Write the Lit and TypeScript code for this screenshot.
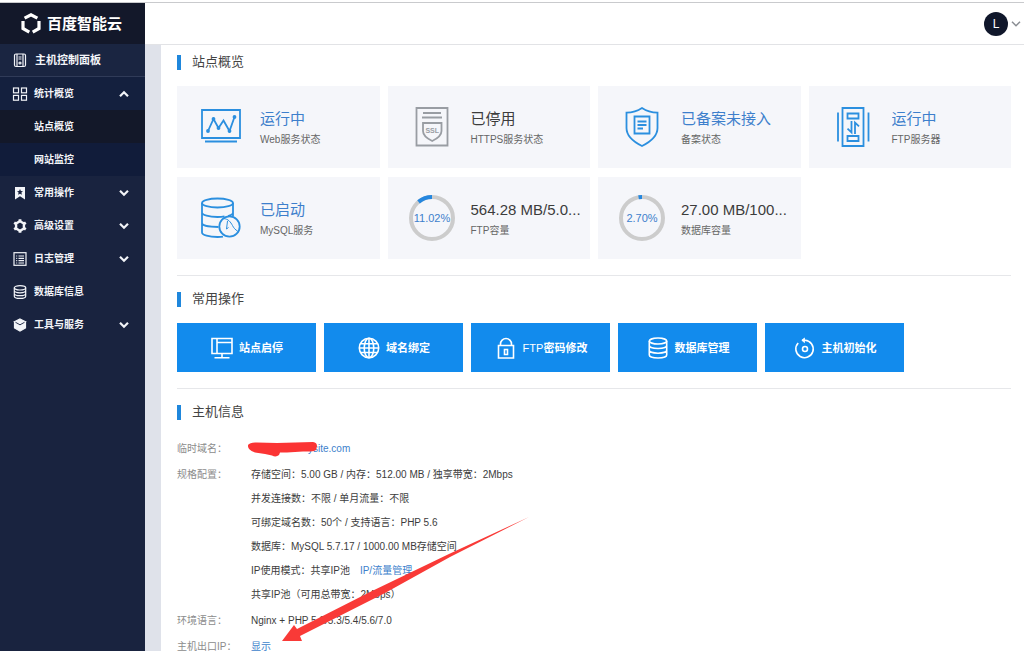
import { LitElement, html, css, svg, nothing, TemplateResult } from "lit";
import { customElement, property, state } from "lit/decorators.js";
import { classMap } from "lit/directives/class-map.js";

const icons: Record<string, TemplateResult> = {
  host: svg`<rect x="2.5" y="2" width="11" height="12.500" rx="1.5"/><path d="M5 2v12.500M11 2v12.500M6.500 5h3M6.500 7h3"/><circle cx="8" cy="11" r="1"/>`,
  grid: svg`<rect x="1.500" y="2" width="5" height="4.800"/><rect x="9.500" y="2" width="5" height="4.800"/><rect x="1.500" y="9.400" width="5" height="4.800"/><rect x="9.500" y="9.400" width="5" height="4.800"/>`,
  bookmark: svg`<path d="M3 2h10v12.500l-5-3.200-5 3.200z" fill="currentColor" stroke="none"/><path d="M8 4l.9 2 2.100.2-1.600 1.400.5 2.200L8 8.700l-1.900 1.100.5-2.200L5 6.200l2.100-.2z" fill="#19233f" stroke="none"/>`,
  gear: svg`<path d="M8 3.200l3.900 2.300v5L8 12.800l-3.900-2.300v-5z" stroke-width="2.400"/><path d="M8 1.200v2.300M8 12.500v2.300M2.200 4.600l1.800 1.100M12 10.300l1.800 1.100M2.200 11.400l1.800-1.100M12 5.700l1.800-1.100" stroke-width="2.800"/>`,
  list: svg`<rect x="2" y="1.700" width="12" height="12.600"/><path d="M4.200 5h1M6.500 5h5.500M4.200 7.300h1M6.500 7.300h5.500M4.200 9.600h1M6.500 9.600h5.500M4.200 12h1M6.500 12h5.500"/>`,
  db: svg`<ellipse cx="8" cy="3.800" rx="5.700" ry="2.200"/><path d="M2.300 3.800v8.400c0 1.300 2.500 2.200 5.700 2.200s5.700-.9 5.700-2.200V3.800M2.300 6.600c0 1.300 2.500 2.200 5.700 2.200s5.700-.9 5.700-2.200M2.300 9.400c0 1.300 2.500 2.200 5.700 2.200s5.700-.9 5.700-2.200"/>`,
  box: svg`<path d="M8 2l5.500 2.700L8 7.500 2.500 4.700z" fill="currentColor"/><path d="M2.500 5.500L8 8.200l5.500-2.700v5.500L8 14l-5.500-3z" fill="currentColor"/><path d="M3.500 5.300L8 7.800l4.500-2.500" stroke="#19233f" stroke-width=".9"/>`,
  chevron: svg`<path d="M4 5.800l4 4 4-4"/>`,
  logo: svg`<path d="M5.600 6.200L12 2.800l6.400 3.400M4 9v7.500l6.300 3.600M20 9v7.500l-6.300 3.600"/>`,
  web: svg`<path d="M4 6h38v28H4zM7 37.500h32"/><path d="M10 27l5.500-12 5 9 5-7.500 6 10.500 5-14"/><g fill="currentColor"><circle cx="10" cy="27" r="1"/><circle cx="15.500" cy="15" r="1"/><circle cx="20.500" cy="24" r="1"/><circle cx="31.500" cy="27" r="1"/><circle cx="36.500" cy="13" r="1"/></g>`,
  ssl: svg`<path d="M7.500 4h31v37.500h-31zM14 9h18M13 13.500h20"/><path d="M14 19h18.500v8c0 5-4 7.500-9.300 10C18 34.500 14 32 14 27z"/><text x="23.200" y="28.500" text-anchor="middle" font-size="7" font-weight="700" stroke="none" fill="currentColor">SSL</text>`,
  shield: svg`<path d="M23 4c4.500 3 9.500 4.500 15.500 4.700V24c0 8.500-7 13.800-15.500 18C14.500 37.800 7.500 32.500 7.500 24V8.700C13.500 8.500 18.500 7 23 4z"/><path d="M15.500 12.500h15v17h-15zM18.500 17.500h9M18.500 21h9M18.500 24.500h5.500"/>`,
  ftp: svg`<path d="M12.500 4h21v38h-21zM8 8.500v29M38.500 8.500v29M17.500 9.500h11v5h-11zM17.500 32h11v5h-11z"/><path d="M21.500 17v11.500l-4-3.800M25 30V18.500l4 3.800"/>`,
  mysql: svg`<ellipse cx="19.500" cy="8" rx="15.500" ry="4.500"/><path d="M4 8v29.500c0 2.500 7 4.500 15.500 4.500 2.200 0 4-.1 5.500-.4M35 8v13.500M4 17.500C4 20 11 22 19.500 22c3 0 5-.2 7-.6M35 17.500c0 1.500-2 2.700-5 3.500M4 28c0 2.200 6.500 4 16.500 4"/><circle cx="31.500" cy="31.500" r="10.200"/><path d="M25.500 23.500c5 .5 7 3.500 9 7 1 2.200 3 4.500 5 5.500M29.500 26l-1 8M28.500 34l2-1.500" stroke-width="1"/>`,
  screen: svg`<path d="M2 2.500h20v15H2zM7 2.500v15M7 6.500h15M12 17.500v4M4.500 21.800h15"/>`,
  globe: svg`<circle cx="12" cy="12" r="9.700"/><ellipse cx="12" cy="12" rx="4.800" ry="9.700"/><path d="M12 2.300v19.400M3.500 7.700h17M2.300 12h19.400M3.500 16.500h17"/>`,
  lock: svg`<path d="M4.500 9.500h15V22h-15zM6.500 9.500V8C6.500 5 9 2.500 12 2.500S17.500 5 17.500 8v1.500M10.500 13.500h3v5h-3z"/>`,
  bigdb: svg`<ellipse cx="12" cy="5" rx="8.700" ry="3"/><path d="M3.300 5v14c0 1.700 3.900 3 8.700 3s8.700-1.300 8.700-3V5M3.300 9.500c0 1.700 3.900 3 8.700 3s8.700-1.300 8.700-3M3.300 14.200c0 1.700 3.900 3 8.700 3s8.700-1.300 8.700-3"/>`,
  reset: svg`<path d="M5.200 7A8.700 8.700 0 1 0 12 4.300H9"/><path d="M11.500 2L8.800 4.300l2.700 2.300z" fill="currentColor" stroke-width=".8"/><circle cx="12" cy="13" r="2.500"/>`,
};

const icon = (name: string, size: number, stroke: number) => html`<svg
  aria-hidden="true" width=${size} height=${size} viewBox="0 0 ${size} ${size}"
  fill="none" stroke="currentColor" stroke-width=${stroke}>${icons[name]}</svg>`;

const FONT = css`"Liberation Sans", "Noto Sans CJK SC", sans-serif`;

interface NavItem { icon: string; label: string; children?: string[]; expandable?: boolean }

const NAV: NavItem[] = [
  { icon: "grid", label: "统计概览", expandable: true, children: ["站点概览", "网站监控"] },
  { icon: "bookmark", label: "常用操作", expandable: true },
  { icon: "gear", label: "高级设置", expandable: true },
  { icon: "list", label: "日志管理", expandable: true },
  { icon: "db", label: "数据库信息" },
  { icon: "box", label: "工具与服务", expandable: true },
];

@customElement("side-nav")
export class SideNav extends LitElement {
  @state() private open = "统计概览";

  static styles = css`
    :host { display: block; background: #19233f; color: #f2f4f8; font: bold 10px/15px ${FONT}; }
    svg { flex: none; display: block; }
    .logo { display: flex; align-items: center; gap: 4px; height: 41px; padding-left: 19px; background: #13182a; font-size: 15px; line-height: 20px; color: #fff; }
    .panel, .item, .child { box-sizing: border-box; display: flex; align-items: center; width: 100%; height: 33px; border: 0; margin: 0; color: inherit; font: inherit; text-decoration: none; text-align: left; background: none; }
    .panel { padding: 0 12px; gap: 7px; font-size: 11px; background: #1a2541; border-bottom: 1px solid #303b58; }
    .item { padding: 0 13px 0 12px; gap: 6px; cursor: pointer; }
    .item.open { background: #14203e; }
    .label { flex: 1; }
    .child { padding-left: 34px; background: #111c3a; }
    .child.active { background: #131829; }
    .arrow { display: flex; }
    .open .arrow { transform: rotate(180deg); }
  `;

  render() {
    return html`
      <div class="logo">${icon("logo", 24, 3.2)}<span>百度智能云</span></div>
      <a class="panel" href="#panel">${icon("host", 16, 1.2)}<span>主机控制面板</span></a>
      <nav>${NAV.map((n) => this.item(n))}</nav>`;
  }

  private item(n: NavItem) {
    const open = this.open === n.label;
    const body = html`${icon(n.icon, 16, 1.2)}<span class="label">${n.label}</span>`;
    if (!n.expandable) return html`<a class="item" href="#database">${body}</a>`;
    return html`
      <button class=${classMap({ item: true, open })} aria-expanded=${open}
        @click=${() => (this.open = open ? "" : n.label)}>
        ${body}<span class="arrow">${icon("chevron", 16, 2.2)}</span>
      </button>
      ${open && n.children
        ? n.children.map((c, i) => html`<a class=${classMap({ child: true, active: i === 0 })} href="#stats">${c}</a>`)
        : nothing}`;
  }
}

@customElement("status-card")
export class StatusCard extends LitElement {
  @property() icon = "";
  @property() value = "";
  @property() label = "";
  @property() tone = "blue";
  @property({ type: Number }) percent = -1;

  static styles = css`
    :host { box-sizing: border-box; display: flex; align-items: center; gap: 16px; min-width: 0; height: 82px; padding: 0 5px 0 21px; background: #f5f6fa; font-family: ${FONT}; }
    svg { display: block; flex: none; }
    .figure { color: #2b8fdf; flex: none; }
    .figure.gray { color: #999da3; }
    .text { min-width: 0; padding-top: 2px; }
    .value { font-size: 15px; line-height: 22px; color: #3d7fcc; overflow: hidden; white-space: nowrap; text-overflow: ellipsis; }
    .value.dark { color: #3c3c3c; }
    .label { font-size: 10px; line-height: 16px; margin-top: 2px; color: #666; }
    .ring { fill: none; stroke: #cccccc; stroke-width: 4; }
    .arc { fill: none; stroke: #2587df; stroke-width: 4; }
    .pct { font-size: 11px; fill: #3d7fcc; text-anchor: middle; }
  `;

  render() {
    const length = 2 * Math.PI * 21;
    return html`
      <div class=${classMap({ figure: true, gray: this.tone === "gray" })}>
        ${this.percent < 0
          ? icon(this.icon, 46, 1.8)
          : html`<svg width="46" height="46" viewBox="0 0 46 46" role="img" aria-label=${this.label}>
              <circle class="ring" cx="23" cy="23" r="21"/>
              <circle class="arc" cx="23" cy="23" r="21" transform="matrix(0 -1 -1 0 46 46)"
                stroke-dasharray="${(length * this.percent) / 100} ${length}"/>
              <text class="pct" x="23" y="27">${this.percent.toFixed(2)}%</text>
            </svg>`}
      </div>
      <div class="text">
        <div class=${classMap({ value: true, dark: this.tone !== "blue" })}>${this.value}</div>
        <div class="label">${this.label}</div>
      </div>`;
  }
}

const CARDS = [
  { icon: "web", value: "运行中", label: "Web服务状态" },
  { icon: "ssl", value: "已停用", label: "HTTPS服务状态", tone: "gray" },
  { icon: "shield", value: "已备案未接入", label: "备案状态" },
  { icon: "ftp", value: "运行中", label: "FTP服务器" },
  { icon: "mysql", value: "已启动", label: "MySQL服务" },
  { icon: "", value: "564.28 MB/5.0...", label: "FTP容量", tone: "dark", percent: 11.02 },
  { icon: "", value: "27.00 MB/100...", label: "数据库容量", tone: "dark", percent: 2.7 },
];

const ACTIONS = [
  { icon: "screen", latin: "", label: "站点启停" },
  { icon: "globe", latin: "", label: "域名绑定" },
  { icon: "lock", latin: "FTP", label: "密码修改" },
  { icon: "bigdb", latin: "", label: "数据库管理" },
  { icon: "reset", latin: "", label: "主机初始化" },
];

@customElement("app-root")
export class AppRoot extends LitElement {
  static styles = css`
    :host { box-sizing: border-box; position: relative; display: flex; flex-direction: column; height: 100vh; overflow: hidden; padding-top: 2px; background: #fff; font-family: ${FONT}; color: #333; }
    .frame { flex: 1; min-height: 0; display: grid; grid-template-columns: 145px minmax(0, 1fr); border-top: 1px solid #c9cacd; }
    .page { display: flex; flex-direction: column; min-height: 0; background: #dfe2ea; }
    .top { box-sizing: border-box; flex: none; display: flex; justify-content: flex-end; height: 42px; background: #fff; border-bottom: 1px solid #e2e3e6; }
    .user { display: flex; align-items: center; padding: 0; border: 0; background: none; color: #8a8d93; font: inherit; cursor: pointer; }
    .avatar { width: 24px; height: 24px; border-radius: 50%; background: #10172b; color: #fff; font-size: 12px; line-height: 24px; text-align: center; }
    svg { display: block; flex: none; }
    main { flex: 1; min-height: 0; overflow: auto; scrollbar-width: none; margin-left: 16px; padding: 8px 13px 0 16px; background: #fff; }
    section + section { margin-top: 16px; padding-top: 14px; border-top: 1px solid #e6e7ea; }
    h2 { display: flex; align-items: center; gap: 11px; margin: 0 0 15px; font-size: 13px; line-height: 18px; font-weight: 400; color: #444; }
    h2::before { content: ""; width: 4px; height: 15px; background: #1f87dc; }
    .cards { display: grid; grid-template-columns: repeat(4, minmax(0, 1fr)); gap: 9px 8px; }
    .actions { display: flex; flex-wrap: wrap; gap: 8px; }
    .action { display: flex; align-items: center; justify-content: center; gap: 5px; width: 139px; height: 49px; padding: 0; border: 0; background: #128bed; color: #fff; font: bold 11px/16px ${FONT}; cursor: pointer; }
    .latin { font-weight: 400; }
    dl { display: grid; grid-template-columns: 74px minmax(0, 1fr); row-gap: 2px; margin: 16px 0 0; font-size: 10px; line-height: 24px; }
    dt { color: #8c8c8c; }
    dd { margin: 0; color: #3c3c3c; }
    a { color: #3d7fcc; text-decoration: none; }
    .more { margin-left: 10px; }
    .domain { position: relative; display: inline-block; padding-left: 57px; }
    .scribble { position: absolute; left: -4px; top: 4px; }
    .pointer { position: absolute; left: 281px; top: 516px; }
  `;

  render() {
    return html`
      <div class="frame">
        <side-nav></side-nav>
        <div class="page">
          <header class="top">
            <button class="user" aria-label="账户"><span class="avatar">L</span>${icon("chevron", 16, 1.5)}</button>
          </header>
          <main>
            <section>
              <h2>站点概览</h2>
              <div class="cards">
                ${CARDS.map((c) => html`<status-card .icon=${c.icon} .value=${c.value} .label=${c.label}
                  .tone=${c.tone ?? "blue"} .percent=${c.percent ?? -1}></status-card>`)}
              </div>
            </section>
            <section>
              <h2>常用操作</h2>
              <div class="actions">
                ${ACTIONS.map((a) => html`<button class="action">${icon(a.icon, 24, 1.6)}<span><span class="latin">${a.latin}</span>${a.label}</span></button>`)}
              </div>
            </section>
            <section>
              <h2>主机信息</h2>
              <dl>
                <dt>临时域名：</dt>
                <dd><a class="domain" href="#site">ysite.com<svg class="scribble" aria-hidden="true" width="72" height="18" viewBox="0 0 72 18"><path d="M1 4Q3 1 10 1.500L30 2 66 1Q70 1.500 70 5L69 9Q66 11 56 10.500L40 11.500 33 11.500 32 14Q29 16.500 25 14.500L18 13 8 11.500Q0 9 1 4z" fill="#fb3434"/></svg></a></dd>
                <dt>规格配置：</dt>
                <dd>
                  <div>存储空间：5.00 GB / 内存：512.00 MB / 独享带宽：2Mbps</div>
                  <div>并发连接数：不限 / 单月流量：不限</div>
                  <div>可绑定域名数：50个 / 支持语言：PHP 5.6</div>
                  <div>数据库：MySQL 5.7.17 / 1000.00 MB存储空间</div>
                  <div>IP使用模式：共享IP池<a class="more" href="#ip">IP/流量管理</a></div>
                  <div>共享IP池（可用总带宽：2Mbps）</div>
                </dd>
                <dt>环境语言：</dt>
                <dd>Nginx + PHP 5.2/5.3/5.4/5.6/7.0</dd>
                <dt>主机出口IP：</dt>
                <dd><a href="#show">显示</a></dd>
              </dl>
            </section>
          </main>
        </div>
      </div>
      <svg class="pointer" aria-hidden="true" width="250" height="128" viewBox="0 0 250 128">
        <path d="M248 1L169 37.500 89 76 16 113 13 109 1 125 21 125 19 120 104 77 169 41z" fill="#f93a37"/>
      </svg>`;
  }
}
